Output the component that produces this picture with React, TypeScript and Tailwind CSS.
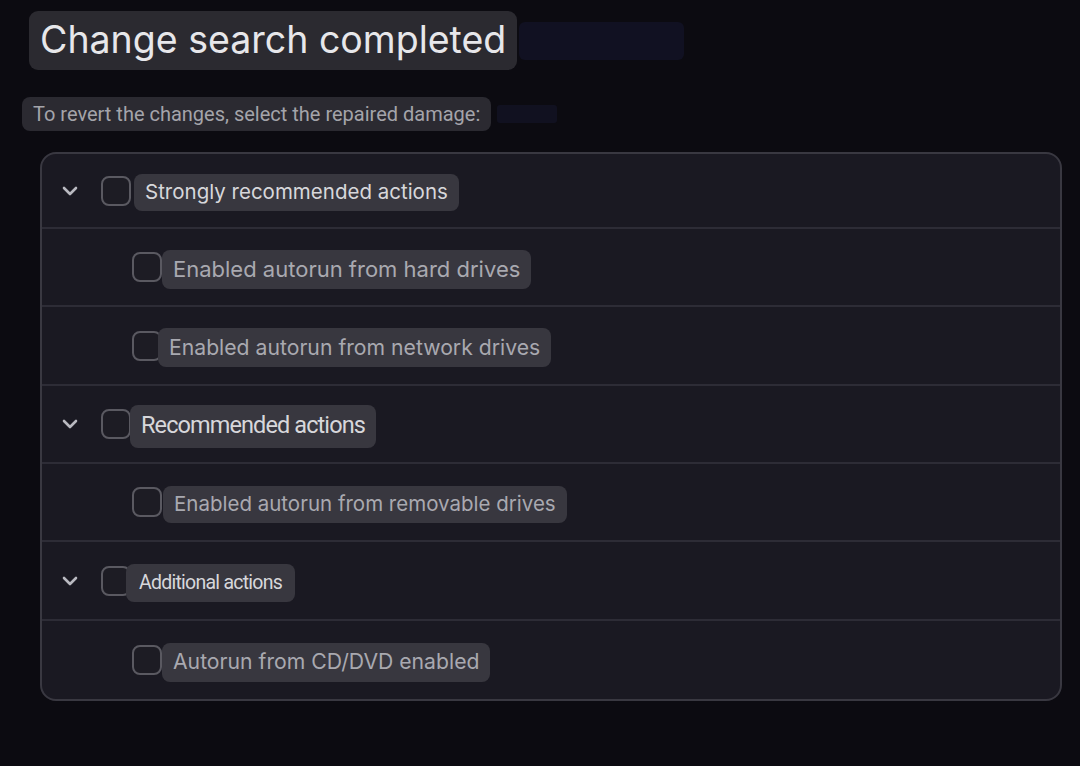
import React from 'react';

type Item = { label: string; pill: string; text: string; row: string };
type Group = { title: string; titleClass: string; row: string; items: Item[] };

const groups: Group[] = [
  {
    title: 'Strongly recommended actions',
    titleClass: 'ml-[3px] h-[37px] px-[11px] text-[20.5px] font-["Inter"]',
    row: 'h-[73px]',
    items: [
      { label: 'Enabled autorun from hard drives', pill: 'ml-0 h-[39px] px-[11px]', text: 'text-[22px]', row: 'h-[78px]' },
      { label: 'Enabled autorun from network drives', pill: '-ml-[4px] h-[39px] px-[11px]', text: 'text-[21.2px]', row: 'h-[79px]' },
    ],
  },
  {
    title: 'Recommended actions',
    titleClass: '-ml-[1px] h-[43px] px-[11px] text-[23.5px] font-["Roboto"] tracking-[-0.9px]',
    row: 'h-[78px] border-t-2 border-[#2d2c36]',
    items: [
      { label: 'Enabled autorun from removable drives', pill: 'ml-[1px] h-[37px] px-[11px]', text: 'text-[20.5px]', row: 'h-[78px]' },
    ],
  },
  {
    title: 'Additional actions',
    titleClass: '-ml-[5px] h-[38px] px-[13px] text-[19.5px] font-["Roboto"] tracking-[-0.75px]',
    row: 'h-[79px] border-t-2 border-[#2d2c36]',
    items: [{ label: 'Autorun from CD/DVD enabled', pill: 'ml-0 h-[39px] px-[11px]', text: 'text-[21.2px]', row: 'h-[80px]' }],
  },
];

function Chevron() {
  return (
    <svg width="16" height="10" viewBox="0 0 16 10" fill="none" className="shrink-0">
      <path d="M2 2l6 6 6-6" stroke="#b9b9c0" strokeWidth="2.6" strokeLinecap="round" strokeLinejoin="round" />
    </svg>
  );
}

function Box() {
  return <div className="h-[30px] w-[30px] shrink-0 rounded-[8px] border-2 border-[#5a5961] bg-[#1d1c24]" />;
}

export default function App() {
  return (
    <div className="min-h-screen w-full bg-[#0c0b11] font-['Inter',sans-serif] overflow-hidden">
      <div className="flex items-center pl-[29px] pt-[11px]">
        <div className="flex h-[59px] items-center rounded-[9px] bg-[#2b2a30] px-[11px] text-[37.5px] text-[#e7e7ea]">
          Change search completed
        </div>
        <div className="ml-[2px] h-[38px] w-[165px] rounded-[6px] bg-[#111122]" />
      </div>
      <div className="mt-[27px] flex items-center pl-[22px]">
        <div className="flex h-[34px] items-center rounded-[8px] bg-[#2b2a31] px-[11px] font-['Roboto'] text-[20px] text-[#a4a4aa]">
          To revert the changes, select the repaired damage:
        </div>
        <div className="ml-[6px] h-[18px] w-[60px] rounded-[3px] bg-[#111120]" />
      </div>

      <div className="ml-[40px] mt-[21px] w-[1022px] overflow-hidden rounded-[16px] border-2 border-[#393841] bg-[#1a1922]">
        {groups.map((g) => (
          <React.Fragment key={g.title}>
            <div className={`flex items-center pl-[20px] ${g.row}`}>
              <Chevron />
              <div className="ml-[23px]">
                <Box />
              </div>
              <div className={`mt-[4px] flex items-center rounded-[8px] bg-[#38373f] text-[#d7d7db] ${g.titleClass}`}>
                {g.title}
              </div>
            </div>
            {g.items.map((it) => (
              <div key={it.label} className={`flex items-center border-t-2 border-[#2d2c36] pl-[90px] ${it.row}`}>
                <Box />
                <div className={`mt-[4px] flex items-center rounded-[8px] bg-[#38373f] text-[#a9a9b0] ${it.pill} ${it.text}`}>
                  {it.label}
                </div>
              </div>
            ))}
          </React.Fragment>
        ))}
      </div>
    </div>
  );
}
